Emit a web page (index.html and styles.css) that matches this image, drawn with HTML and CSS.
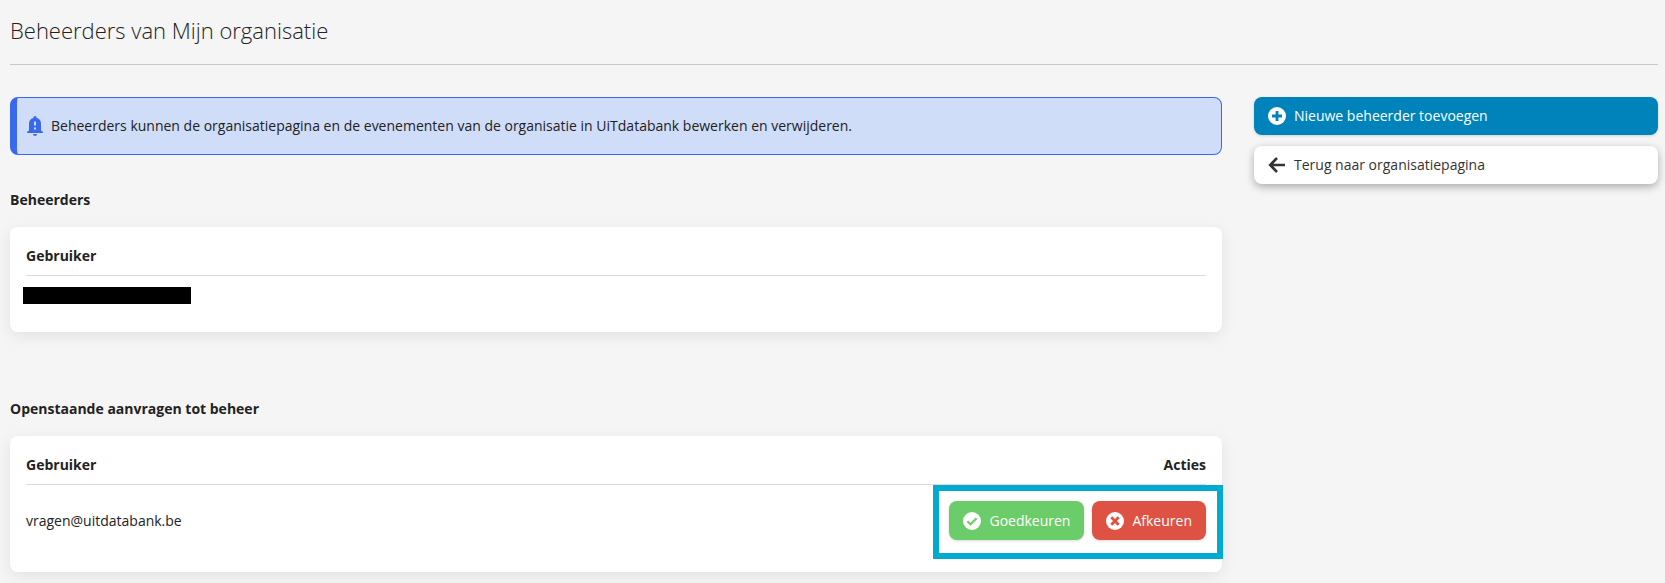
FILE: index.html
```html
<!DOCTYPE html>
<html lang="nl">
<head>
    <meta charset="UTF-8">
    <meta name="viewport" content="width=device-width, initial-scale=1.0">
    <title>Beheerders van Mijn organisatie</title>
    <link rel="stylesheet" href="styles.css">
</head>
<body>
    <header class="page-header">
        <h1>Beheerders van Mijn organisatie</h1>
    </header>

    <div class="layout">
        <main>
            <div class="alert">
                <svg class="alert-icon" viewBox="0 0 16 20" aria-hidden="true">
                    <path fill="currentColor" fill-rule="evenodd" d="M8 0a1.6 1.6 0 0 1 1.6 1.6v.3A6 6 0 0 1 14 8v6.500l2 1.500v1H0v-1l2-1.500V8a6 6 0 0 1 4.400-6.100v-.3A1.600 1.600 0 0 1 8 0zM7 5.500v4h2v-4zm0 6v2h2v-2zM6 18h4a2 2 0 0 1-4 0z"/>
                </svg>
                <p>Beheerders kunnen de organisatiepagina en de evenementen van de organisatie in UiTdatabank bewerken en verwijderen.</p>
            </div>

            <section>
                <h2>Beheerders</h2>
                <div class="card">
                    <table>
                        <thead>
                            <tr><th>Gebruiker</th></tr>
                        </thead>
                        <tbody>
                            <tr><td><span class="redacted"></span></td></tr>
                        </tbody>
                    </table>
                </div>
            </section>

            <section>
                <h2>Openstaande aanvragen tot beheer</h2>
                <div class="card">
                    <table>
                        <thead>
                            <tr>
                                <th>Gebruiker</th>
                                <th class="right">Acties</th>
                            </tr>
                        </thead>
                        <tbody>
                            <tr>
                                <td>vragen@uitdatabank.be</td>
                                <td class="right">
                                    <div class="actions">
                                        <button type="button" class="btn btn-success">
                                            <svg class="icon" viewBox="0 0 18 18" aria-hidden="true">
                                                <circle cx="9" cy="9" r="9" fill="currentColor"/>
                                                <path class="cutout" d="M4.400 9.200l3.100 3.100 6.100-6.100"/>
                                            </svg>
                                            Goedkeuren
                                        </button>
                                        <button type="button" class="btn btn-danger">
                                            <svg class="icon" viewBox="0 0 18 18" aria-hidden="true">
                                                <circle cx="9" cy="9" r="9" fill="currentColor"/>
                                                <path class="cutout thick" d="M5.300 5.300l7.400 7.400M12.700 5.300l-7.400 7.400"/>
                                            </svg>
                                            Afkeuren
                                        </button>
                                    </div>
                                </td>
                            </tr>
                        </tbody>
                    </table>
                </div>
            </section>
        </main>

        <aside class="sidebar">
            <button type="button" class="btn btn-primary">
                <svg class="icon" viewBox="0 0 18 18" aria-hidden="true">
                    <circle cx="9" cy="9" r="9" fill="currentColor"/>
                    <path class="cutout thick" d="M9 4v10M4 9h10"/>
                </svg>
                Nieuwe beheerder toevoegen
            </button>
            <a href="#" class="btn btn-light">
                <svg class="icon" viewBox="0 0 18 18" aria-hidden="true">
                    <path class="arrow" d="M9 2L2.200 9 9 16M2.500 9H17"/>
                </svg>
                Terug naar organisatiepagina
            </a>
        </aside>
    </div>
</body>
</html>
```
FILE: styles.css
```css
* {
    margin: 0;
    padding: 0;
    box-sizing: border-box;
}

body {
    font-family: 'Segoe UI', 'Open Sans', 'Noto Sans', sans-serif;
    font-size: 14px;
    line-height: 24px;
    color: #222;
    background: #f5f5f5;
    padding: 0 7px 11px 10px;
}

.page-header {
    padding: 14px 0 18px;
    margin-bottom: 32px;
    border-bottom: 1px solid #c9c9c9;
}

h1 {
    font-size: 22px;
    line-height: 32px;
    font-weight: 300;
}

h2 {
    font-size: 14px;
    font-weight: 700;
    padding-top: 1px;
    margin-bottom: 15px;
}

.layout {
    display: grid;
    grid-template-columns: 3fr 1fr;
    gap: 32px;
    align-items: start;
}

.alert {
    display: flex;
    align-items: center;
    gap: 8px;
    padding: 16px 16px 16px 10px;
    margin-bottom: 32px;
    border: 1px solid #3868ec;
    border-left-width: 7px;
    border-radius: 8px;
    background: #d0ddf9;
}

.alert-icon {
    width: 16px;
    height: 20px;
    flex-shrink: 0;
    color: #3868ec;
}

section + section {
    margin-top: 64px;
}

.card {
    padding: 16px;
    border-radius: 8px;
    background: #fff;
    box-shadow: 0 4px 16px rgba(0, 0, 0, 0.08);
}

table {
    width: 100%;
    border-collapse: separate;
    border-spacing: 0;
}

th {
    font-weight: 700;
    text-align: left;
    padding: 1px 0 7px;
    border-bottom: 1px solid #dadada;
}

td {
    padding: 8px 0;
}

.right {
    text-align: right;
}

td.right {
    padding: 16px 0;
}

.redacted {
    display: block;
    width: 168px;
    height: 17px;
    margin: 3px 0 4px -3px;
    background: #000;
}

.actions {
    position: relative;
    display: inline-flex;
    gap: 8px;
    vertical-align: top;
}

/* highlight frame around the action buttons */
.actions::after {
    content: "";
    position: absolute;
    inset: -16px -17px -19px -16px;
    border: 6px solid #00aad0;
    pointer-events: none;
}

.sidebar {
    display: flex;
    flex-direction: column;
    gap: 11px;
}

.btn {
    display: flex;
    align-items: center;
    gap: 8px;
    padding: 7px 14px;
    border: none;
    border-radius: 8px;
    font-family: inherit;
    font-size: 14px;
    line-height: 24px;
    color: #fff;
    text-decoration: none;
    cursor: pointer;
    box-shadow: 0 1px 3px rgba(0, 0, 0, 0.15);
}

.actions .btn {
    height: 39px;
}

.btn-primary {
    background: #0083bb;
}

.btn-light {
    background: #fff;
    color: #333;
    box-shadow: 0 3px 8px rgba(0, 0, 0, 0.3);
}

.btn-success {
    background: #6bcd69;
}

.btn-danger {
    background: #dd5242;
}

.icon {
    width: 18px;
    height: 18px;
    flex-shrink: 0;
    fill: none;
}

.cutout {
    stroke-width: 2.2;
}

.thick {
    stroke-width: 2.8;
}

.btn-primary .cutout {
    stroke: #0083bb;
}

.btn-success .cutout {
    stroke: #6bcd69;
}

.btn-danger .cutout {
    stroke: #dd5242;
}

.arrow {
    stroke: currentColor;
    stroke-width: 2.6;
}
```
